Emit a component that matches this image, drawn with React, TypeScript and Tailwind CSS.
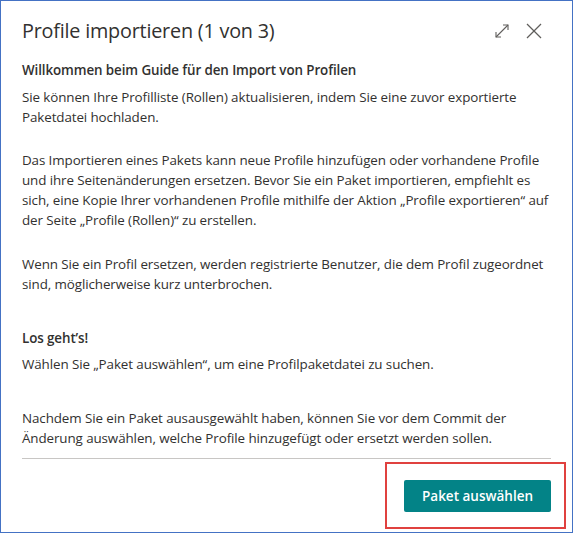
import React from 'react';

const ExpandIcon = () => (
  <svg width="16" height="16" viewBox="0 0 16 16" fill="none" stroke="#605e5c" strokeWidth="1.1">
    <path d="M2 14 L14 2" />
    <path d="M9 2 H14 V7" />
    <path d="M2 9 V14 H7" />
  </svg>
);

const CloseIcon = () => (
  <svg width="16" height="16" viewBox="0 0 16 16" fill="none" stroke="#605e5c" strokeWidth="1.3">
    <path d="M1 1 L15 15" />
    <path d="M15 1 L1 15" />
  </svg>
);

export default function App() {
  return (
    <div className="w-[574px] h-[534px] bg-white" style={{ fontFamily: '"Open Sans", sans-serif' }}>
      <div className="w-[573px] h-[533px] border border-[#4472c4] flex flex-col text-[#323130]">
        <div className="flex items-center justify-between pl-[21px] pr-[30px] pt-[16px]">
          <h1 className="text-[19.8px] leading-[28px] font-normal tracking-[-0.2px]">Profile importieren (1 von 3)</h1>
          <div className="flex items-center gap-[16px]">
            <ExpandIcon />
            <CloseIcon />
          </div>
        </div>

        <div className="flex-1 px-[21px] pt-[15px] text-[13.4px] leading-[20px] tracking-[-0.1px]">
          <p className="font-semibold">Willkommen beim Guide für den Import von Profilen</p>
          <p className="mt-[7px]">
            Sie können Ihre Profilliste (Rollen) aktualisieren, indem Sie eine zuvor exportierte<br />
            Paketdatei hochladen.
          </p>
          <p className="mt-[23px]">
            Das Importieren eines Pakets kann neue Profile hinzufügen oder vorhandene Profile<br />
            und ihre Seitenänderungen ersetzen. Bevor Sie ein Paket importieren, empfiehlt es<br />
            sich, eine Kopie Ihrer vorhandenen Profile mithilfe der Aktion „Profile exportieren“ auf<br />
            der Seite „Profile (Rollen)“ zu erstellen.
          </p>
          <p className="mt-[24px]">
            Wenn Sie ein Profil ersetzen, werden registrierte Benutzer, die dem Profil zugeordnet<br />
            sind, möglicherweise kurz unterbrochen.
          </p>
          <p className="mt-[34px] font-semibold">Los geht’s!</p>
          <p className="mt-[6px]">Wählen Sie „Paket auswählen“, um eine Profilpaketdatei zu suchen.</p>
          <p className="mt-[34px]">
            Nachdem Sie ein Paket ausausgewählt haben, können Sie vor dem Commit der<br />
            Änderung auswählen, welche Profile hinzugefügt oder ersetzt werden sollen.
          </p>
          <div className="mt-[10px] h-px bg-[#c8c6c4]" />
        </div>

        <div className="flex justify-end pr-[6px] pb-[3px]">
          <div className="border-2 border-[#e0413f] pt-[16px] pb-[15px] pl-[17px] pr-[13px]">
            <button className="w-[147px] h-[32px] bg-[#038387] rounded-[2px] text-white text-[13.5px] font-semibold">
              Paket auswählen
            </button>
          </div>
        </div>
      </div>
    </div>
  );
}
